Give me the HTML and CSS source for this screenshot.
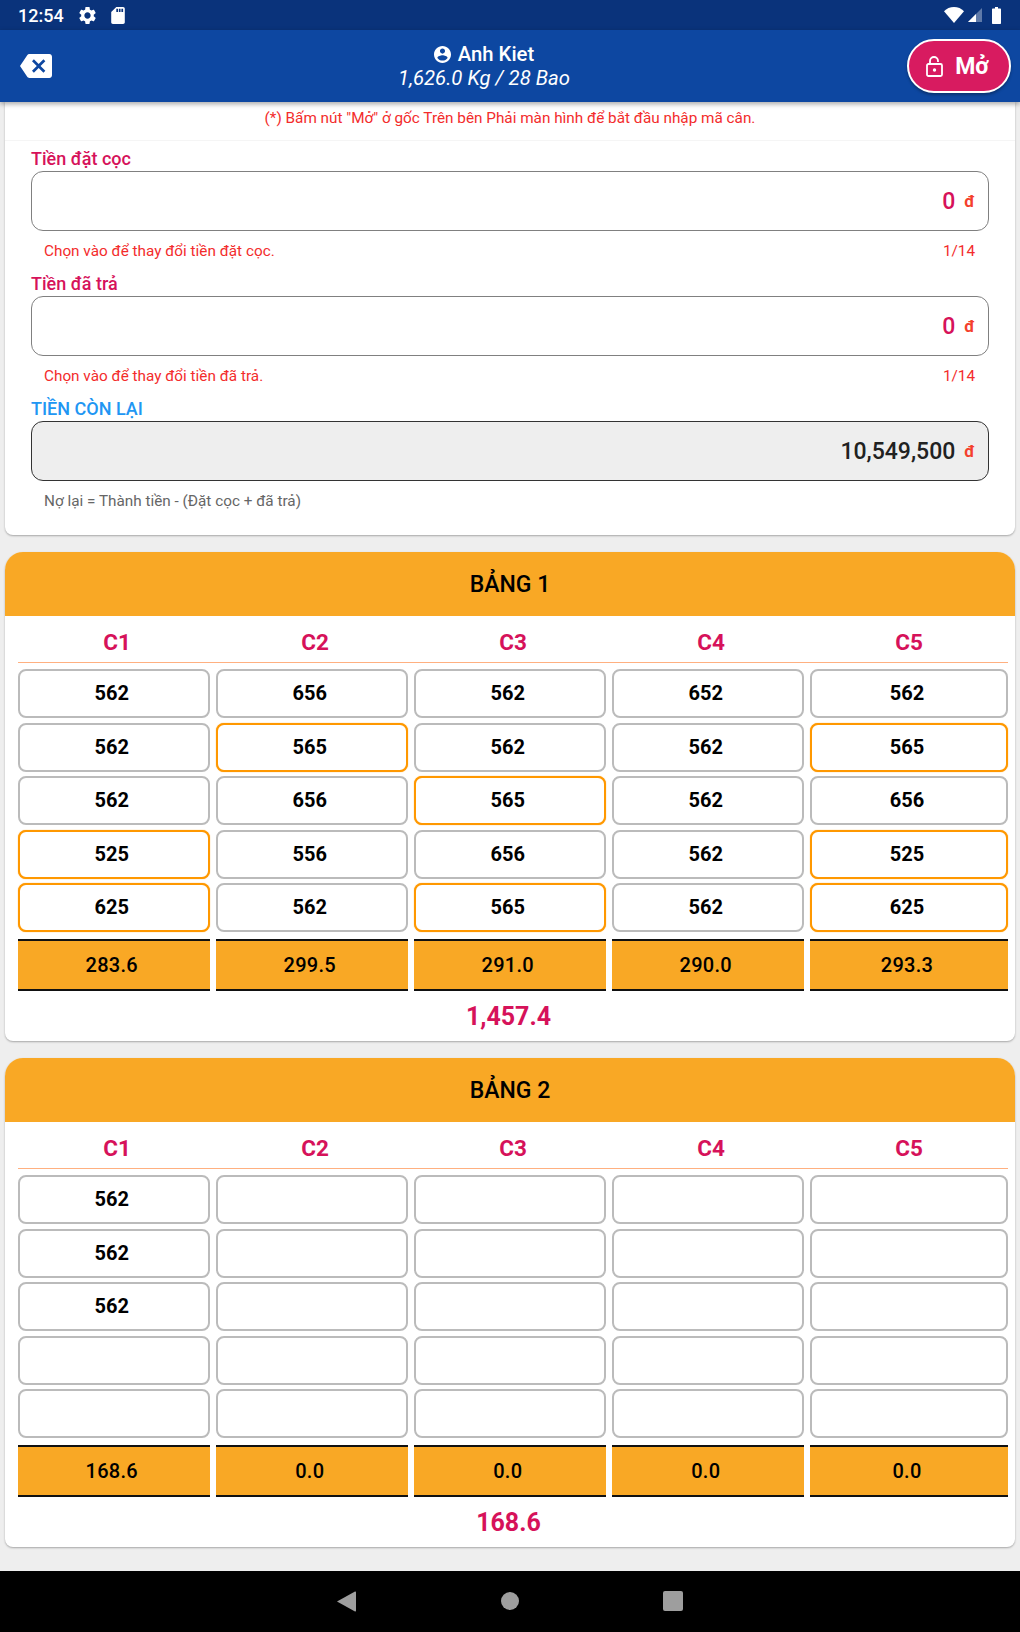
FILE: index.html
```html
<!DOCTYPE html>
<html lang="en">
<head>
    <meta charset="UTF-8">
    <title>Anh Kiet</title>
    <link rel="stylesheet" href="styles.css">
</head>
<body>
    <div id="status-bar">
        <div class="status-left">
            <span class="clock">12:54</span>
            <svg class="icon-gear" viewBox="0 0 24 24"><path d="M19.14 12.94c.04-.3.06-.61.06-.94 0-.32-.02-.64-.07-.94l2.03-1.58c.18-.14.23-.41.12-.61l-1.92-3.32c-.12-.22-.37-.29-.59-.22l-2.39.96c-.5-.38-1.03-.7-1.62-.94l-.36-2.54c-.04-.24-.24-.41-.48-.41h-3.84c-.24 0-.43.17-.47.41l-.36 2.54c-.59.24-1.13.57-1.62.94l-2.39-.96c-.22-.08-.47 0-.59.22L2.74 8.87c-.12.21-.08.47.12.61l2.03 1.58c-.05.3-.09.63-.09.94s.02.64.07.94l-2.03 1.58c-.18.14-.23.41-.12.61l1.92 3.32c.12.22.37.29.59.22l2.39-.96c.5.38 1.03.7 1.62.94l.36 2.54c.05.24.24.41.48.41h3.84c.24 0 .44-.17.47-.41l.36-2.54c.59-.24 1.13-.56 1.62-.94l2.39.96c.22.08.47 0 .59-.22l1.92-3.32c.12-.22.07-.47-.12-.61l-2.01-1.58zM12 15.6c-1.98 0-3.6-1.62-3.6-3.6s1.62-3.6 3.6-3.6 3.6 1.62 3.6 3.6-1.62 3.6-3.6 3.6z"/></svg>
            <svg class="icon-sd" viewBox="4 2 16 20"><path d="M18 2h-8L4.02 8 4 20c0 1.1.9 2 2 2h12c1.1 0 2-.9 2-2V4c0-1.1-.9-2-2-2zm-6 6h-2V4h2v4zm3 0h-2V4h2v4zm3 0h-2V4h2v4z"/></svg>
        </div>
        <div class="status-right">
            <svg class="icon-wifi" viewBox="0 0 20 16"><path d="M10 16L0 4.2C2.6 1.6 6.1 0 10 0s7.400 1.600 10 4.200z"/></svg>
            <svg class="icon-signal" viewBox="0 0 14 14"><path class="signal-off" d="M14 0v14H0z"/><path d="M8 6v8H0z"/></svg>
            <svg class="icon-battery" viewBox="0 0 9 17"><path d="M3 0h3v1.500h2c.6 0 1 .4 1 1V16c0 .6-.4 1-1 1H1c-.6 0-1-.4-1-1V2.500c0-.6.4-1 1-1h2z"/></svg>
        </div>
    </div>

    <div id="app-bar">
        <div class="back-box">
            <svg class="icon-back" viewBox="0 3 24 18"><path d="M22 3H7c-.69 0-1.230.35-1.590.88L0 12l5.410 8.110c.36.53.9.89 1.590.89h15c1.100 0 2-.9 2-2V5c0-1.100-.9-2-2-2zm-3 12.590L17.590 17 14 13.410 10.410 17 9 15.590 12.590 12 9 8.410 10.410 7 14 10.590 17.590 7 19 8.410 15.410 12 19 15.590z"/></svg>
        </div>
        <div class="title-box">
            <div class="title-name">
                <svg class="icon-user" viewBox="2 2 20 20"><path d="M12 2C6.480 2 2 6.480 2 12s4.480 10 10 10 10-4.480 10-10S17.520 2 12 2zm0 3c1.660 0 3 1.340 3 3s-1.340 3-3 3-3-1.340-3-3 1.340-3 3-3zm0 14.200c-2.500 0-4.710-1.280-6-3.220.03-1.990 4-3.080 6-3.080 1.990 0 5.970 1.090 6 3.080-1.290 1.940-3.500 3.220-6 3.220z"/></svg>
                Anh Kiet
            </div>
            <div class="title-sub">1,626.0 Kg / 28 Bao</div>
        </div>
        <div class="open-button">
            <svg class="icon-lock" viewBox="0 0 17 21"><path d="M4 8V5a4 4 0 0 1 8 0v1" fill="none" stroke="#fff" stroke-width="1.800"/><rect x="1" y="8" width="15" height="12" rx="1.500" fill="none" stroke="#fff" stroke-width="1.800"/><circle cx="8.500" cy="14" r="1.700" fill="#fff"/></svg>
            <span>Mở</span>
        </div>
    </div>

    <div id="content">
        <div class="info-card">
            <div class="hint">(*) Bấm nút "Mở" ở gốc Trên bên Phải màn hình để bắt đầu nhập mã cân.</div>
            <div class="fields">
                <div class="field">
                    <div class="field-label">Tiền đặt cọc</div>
                    <div class="field-box"><span class="money">0</span><span class="unit">đ</span></div>
                    <div class="field-help"><span>Chọn vào để thay đổi tiền đặt cọc.</span><span>1/14</span></div>
                </div>
                <div class="field">
                    <div class="field-label">Tiền đã trả</div>
                    <div class="field-box"><span class="money">0</span><span class="unit">đ</span></div>
                    <div class="field-help"><span>Chọn vào để thay đổi tiền đã trả.</span><span>1/14</span></div>
                </div>
                <div class="field">
                    <div class="field-label blue">TIỀN CÒN LẠI</div>
                    <div class="field-box readonly"><span class="money dark">10,549,500</span><span class="unit">đ</span></div>
                    <div class="field-help gray"><span>Nợ lại = Thành tiền - (Đặt cọc + đã trả)</span></div>
                </div>
            </div>
        </div>

        <div class="board">
            <div class="board-title">BẢNG 1</div>
            <div class="board-grid">
                <div class="col">
                    <div class="col-head">C1</div>
                    <div class="cell">562</div>
                    <div class="cell">562</div>
                    <div class="cell">562</div>
                    <div class="cell marked">525</div>
                    <div class="cell marked">625</div>
                    <div class="total">283.6</div>
                </div>
                <div class="col">
                    <div class="col-head">C2</div>
                    <div class="cell">656</div>
                    <div class="cell marked">565</div>
                    <div class="cell">656</div>
                    <div class="cell">556</div>
                    <div class="cell">562</div>
                    <div class="total">299.5</div>
                </div>
                <div class="col">
                    <div class="col-head">C3</div>
                    <div class="cell">562</div>
                    <div class="cell">562</div>
                    <div class="cell marked">565</div>
                    <div class="cell">656</div>
                    <div class="cell marked">565</div>
                    <div class="total">291.0</div>
                </div>
                <div class="col">
                    <div class="col-head">C4</div>
                    <div class="cell">652</div>
                    <div class="cell">562</div>
                    <div class="cell">562</div>
                    <div class="cell">562</div>
                    <div class="cell">562</div>
                    <div class="total">290.0</div>
                </div>
                <div class="col">
                    <div class="col-head">C5</div>
                    <div class="cell">562</div>
                    <div class="cell marked">565</div>
                    <div class="cell">656</div>
                    <div class="cell marked">525</div>
                    <div class="cell marked">625</div>
                    <div class="total">293.3</div>
                </div>
            </div>
            <div class="board-sum">1,457.4</div>
        </div>

        <div class="board">
            <div class="board-title">BẢNG 2</div>
            <div class="board-grid">
                <div class="col">
                    <div class="col-head">C1</div>
                    <div class="cell">562</div>
                    <div class="cell">562</div>
                    <div class="cell">562</div>
                    <div class="cell"></div>
                    <div class="cell"></div>
                    <div class="total">168.6</div>
                </div>
                <div class="col">
                    <div class="col-head">C2</div>
                    <div class="cell"></div>
                    <div class="cell"></div>
                    <div class="cell"></div>
                    <div class="cell"></div>
                    <div class="cell"></div>
                    <div class="total">0.0</div>
                </div>
                <div class="col">
                    <div class="col-head">C3</div>
                    <div class="cell"></div>
                    <div class="cell"></div>
                    <div class="cell"></div>
                    <div class="cell"></div>
                    <div class="cell"></div>
                    <div class="total">0.0</div>
                </div>
                <div class="col">
                    <div class="col-head">C4</div>
                    <div class="cell"></div>
                    <div class="cell"></div>
                    <div class="cell"></div>
                    <div class="cell"></div>
                    <div class="cell"></div>
                    <div class="total">0.0</div>
                </div>
                <div class="col">
                    <div class="col-head">C5</div>
                    <div class="cell"></div>
                    <div class="cell"></div>
                    <div class="cell"></div>
                    <div class="cell"></div>
                    <div class="cell"></div>
                    <div class="total">0.0</div>
                </div>
            </div>
            <div class="board-sum">168.6</div>
        </div>
    </div>

    <div id="nav-bar">
        <svg class="nav-back" viewBox="0 0 19 21"><path d="M18 0.500c.6-.3 1 .1 1 .7v18.600c0 .6-.4 1-1 .7L0 10.500z"/></svg>
        <div class="nav-home"></div>
        <div class="nav-recent"></div>
    </div>
</body>
</html>
```

FILE: styles.css
```css
* {
    box-sizing: border-box;
}
body {
    margin: 0;
    width: 1020px;
    height: 1632px;
    overflow: hidden;
    display: flex;
    flex-direction: column;
    font-family: Roboto, "Noto Sans", sans-serif;
    background-color: #eeeeee;
}

/* status bar */
#status-bar {
    height: 30px;
    flex: none;
    display: flex;
    justify-content: space-between;
    align-items: center;
    background-color: #0a337b;
    color: #fff;
    fill: #fff;
}
.status-left {
    display: flex;
    align-items: center;
    padding-left: 18px;
}
.clock {
    font-size: 18px;
    font-weight: 500;
    width: 59px;
}
.icon-gear {
    width: 21px;
    height: 21px;
    margin-right: 13px;
}
.icon-sd {
    width: 14px;
    height: 17px;
}
.status-right {
    display: flex;
    align-items: center;
    padding-right: 19px;
}
.icon-wifi {
    width: 20px;
    height: 16px;
    margin-right: 4px;
}
.icon-signal {
    width: 14px;
    height: 14px;
    margin-right: 10px;
}
.signal-off {
    opacity: 0.35;
}
.icon-battery {
    width: 9px;
    height: 17px;
}

/* app bar */
#app-bar {
    height: 72px;
    flex: none;
    display: flex;
    align-items: center;
    background-color: #0d47a1;
    color: #fff;
    position: relative;
    box-shadow: 0 2px 5px rgba(0, 0, 0, 0.35);
}
.back-box {
    width: 61px;
    padding-left: 20px;
    display: flex;
}
.icon-back {
    width: 32px;
    height: 24px;
    fill: #fff;
}
.title-box {
    flex: 1;
    padding-top: 1px;
    text-align: center;
}
.title-name {
    display: flex;
    justify-content: center;
    align-items: center;
    gap: 7px;
    font-size: 20.3px;
    font-weight: 500;
    line-height: 24px;
}
.icon-user {
    width: 17px;
    height: 17px;
    fill: #fff;
}
.title-sub {
    font-size: 20.3px;
    font-style: italic;
    line-height: 25px;
}
.open-button {
    width: 104px;
    height: 54px;
    margin-right: 9px;
    padding-right: 3px;
    display: flex;
    align-items: center;
    justify-content: center;
    gap: 12px;
    border: 2.5px solid #fff;
    border-radius: 27px;
    background-color: #d81b60;
    font-size: 23px;
    font-weight: 700;
    box-shadow: 0 2px 3px rgba(0, 0, 0, 0.3);
}
.icon-lock {
    width: 17px;
    height: 21px;
}

/* scrolled content */
#content {
    flex: 1;
    padding: 0 5px;
    overflow: hidden;
}
.info-card {
    height: 433px;
    background-color: #fff;
    border-radius: 0 0 8px 8px;
    box-shadow: 0 1px 2px rgba(0, 0, 0, 0.3);
}
.hint {
    height: 39px;
    padding-top: 6px;
    line-height: 20px;
    font-size: 15.3px;
    text-align: center;
    color: #f32c2c;
    border-bottom: 1px solid #f5f5f5;
}
.fields {
    padding: 5px 26px 0;
}
.field {
    height: 125px;
}
.field-label {
    height: 25px;
    line-height: 25px;
    font-size: 18px;
    font-weight: 500;
    color: #d6125a;
}
.field-label.blue {
    color: #2196f3;
}
.field-box {
    height: 60px;
    display: flex;
    justify-content: flex-end;
    align-items: center;
    padding-right: 13px;
    border: 1px solid #808080;
    border-radius: 12px;
    background-color: #fff;
}
.field-box.readonly {
    background-color: #eeeeee;
    border-color: #333;
}
.money {
    font-size: 23px;
    font-weight: 500;
    color: #d6125a;
}
.money.dark {
    color: #212121;
}
.unit {
    font-size: 17px;
    font-weight: 700;
    margin-left: 9px;
    color: #f4402c;
}
.field-help {
    height: 40px;
    line-height: 41px;
    padding: 0 14px 0 13px;
    display: flex;
    justify-content: space-between;
    font-size: 15.3px;
    color: #f32c2c;
}
.field-help.gray {
    color: #666;
}

/* boards */
.board {
    height: 489px;
    margin-top: 17px;
    background-color: #fff;
    border-radius: 18px 18px 8px 8px;
    box-shadow: 0 1px 2px rgba(0, 0, 0, 0.3);
}
.board-title {
    height: 63.5px;
    line-height: 65px;
    text-align: center;
    font-size: 23px;
    font-weight: 500;
    color: #000;
    background-color: #f9a825;
    border-radius: 18px 18px 0 0;
}
.board-grid {
    display: grid;
    grid-template-columns: repeat(5, 1fr);
    padding: 0 7px 0 13px;
}
.col-head {
    height: 47.5px;
    line-height: 53px;
    margin-bottom: 6px;
    text-align: center;
    font-size: 22.5px;
    font-weight: 700;
    color: #d6125a;
    border-bottom: 1px solid #ffb080;
}
.cell {
    height: 49px;
    margin: 0 6.5px 4.5px 0;
    padding: 0 4px 1px 0;
    display: flex;
    align-items: center;
    justify-content: center;
    font-size: 20px;
    font-weight: 700;
    color: #000;
    background-color: #fff;
    border: 2px solid #bbbbbb;
    border-radius: 8px;
}
.cell.marked {
    border-color: #ff9800;
    box-shadow: 0 0 1px #ff9800;
}
.total {
    height: 52.5px;
    margin: 6.7px 6.5px 0 0;
    padding-right: 4px;
    display: flex;
    align-items: center;
    justify-content: center;
    font-size: 20px;
    font-weight: 500;
    letter-spacing: 0.3px;
    color: #000;
    background-color: #f9a825;
    border-top: 2px solid #111;
    border-bottom: 2px solid #111;
}
.col:last-child .cell,
.col:last-child .total {
    margin-right: 0;
}
.board-sum {
    padding-right: 3px;
    text-align: center;
    line-height: 52px;
    font-size: 25px;
    font-weight: 700;
    color: #d6125a;
}

/* nav bar */
#nav-bar {
    height: 61.500px;
    flex: none;
    display: flex;
    align-items: center;
    justify-content: center;
    gap: 144px;
    background-color: #000;
}
.nav-back {
    width: 19px;
    height: 21px;
    margin-right: 1px;
    fill: #9e9e9e;
}
.nav-home {
    width: 18px;
    height: 18px;
    border-radius: 50%;
    background-color: #9e9e9e;
}
.nav-recent {
    width: 20px;
    height: 20px;
    border-radius: 2px;
    background-color: #9e9e9e;
}
```
